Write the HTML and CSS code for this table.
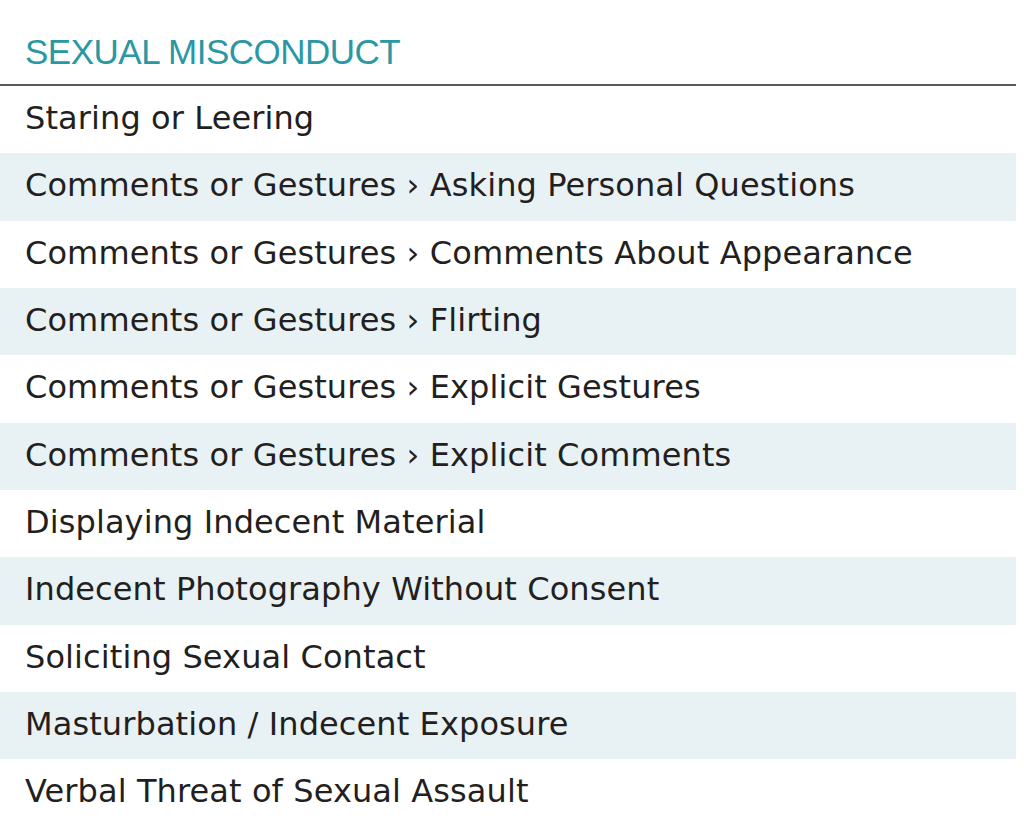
FILE: index.html
```html
<!DOCTYPE html>
<html>
<head>
<meta charset="utf-8">
<link rel="stylesheet" href="styles.css">
</head>
<body>
<section class="panel">
  <h2 class="title">SEXUAL MISCONDUCT</h2>
  <ul class="list">
    <li class="row">Staring or Leering</li>
    <li class="row alt">Comments or Gestures › Asking Personal Questions</li>
    <li class="row">Comments or Gestures › Comments About Appearance</li>
    <li class="row alt">Comments or Gestures › Flirting</li>
    <li class="row">Comments or Gestures › Explicit Gestures</li>
    <li class="row alt">Comments or Gestures › Explicit Comments</li>
    <li class="row">Displaying Indecent Material</li>
    <li class="row alt">Indecent Photography Without Consent</li>
    <li class="row">Soliciting Sexual Contact</li>
    <li class="row alt">Masturbation / Indecent Exposure</li>
    <li class="row">Verbal Threat of Sexual Assault</li>
  </ul>
</section>
</body>
</html>
```
FILE: styles.css
```css
html, body {
  margin: 0;
  padding: 0;
  background: #ffffff;
}
body {
  font-family: "DejaVu Sans", "Liberation Sans", sans-serif;
}
.panel {
  width: 1016px;
}
.title {
  margin: 0;
  height: 86px;
  box-sizing: border-box;
  padding: 32px 0 0 25px;
  font-family: "Liberation Sans", Arial, sans-serif;
  font-size: 35px;
  line-height: 40px;
  font-weight: normal;
  color: #2a98a3;
  letter-spacing: -0.5px;
  border-bottom: 2px solid #5a5a5a;
}
.list {
  list-style: none;
  margin: 0;
  padding: 0;
}
.row {
  height: 67.33px;
  box-sizing: border-box;
  padding-left: 25px;
  padding-top: 14px;
  font-size: 32px;
  line-height: 36px;
  letter-spacing: 0.1px;
  color: #231f20;
}
.alt {
  background: #e8f1f4;
}
```
